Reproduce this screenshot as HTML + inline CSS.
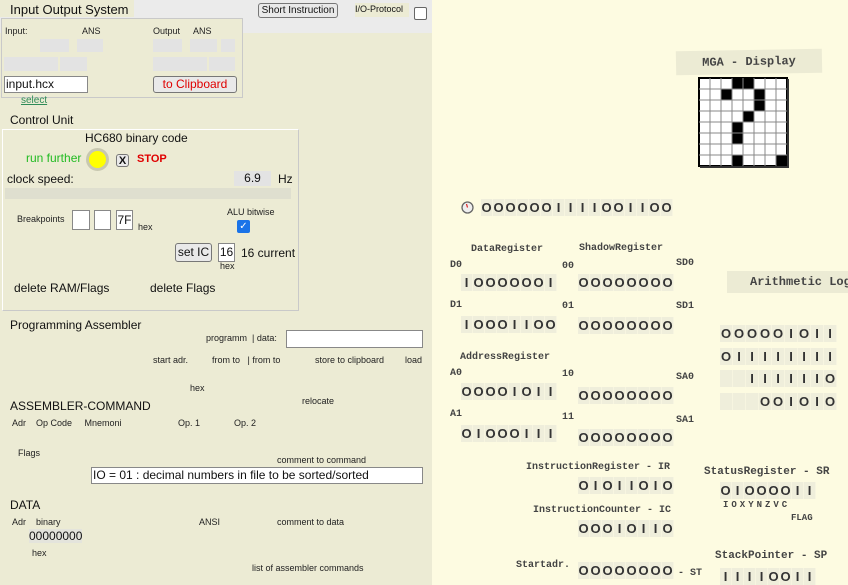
<!DOCTYPE html>
<html><head><meta charset="utf-8"><style>
*{margin:0;padding:0;box-sizing:border-box}
body{width:848px;height:585px;overflow:hidden;position:relative;background:#fdfbe1;font-family:"Liberation Sans",sans-serif;color:#111}
.a{position:absolute;white-space:nowrap}
#left{position:absolute;left:0;top:0;width:432px;height:585px;background:#ecebd4}
.s{font-size:9px;color:#222}
.m{font-family:"Liberation Mono",monospace;font-weight:bold;font-size:10px;color:#444}
.bits{position:absolute;display:flex}
.bits span{display:block;width:12px;height:17px;background:#efeedb;border-right:1px solid #f7f5e0;text-align:center;font:bold 13px/17px "Liberation Sans",sans-serif;color:#333}
.b13 span{width:13px}
.box{position:absolute;border:1px solid #c9c9c9;}
.inp{position:absolute;background:#fff;border:1px solid #888}
.g{position:absolute;background:#e3e3e3}
.btn{position:absolute;border:1px solid #777;border-radius:3px;background:#e9e9e9;font-size:10px;text-align:center}
</style></head><body>
<div id="left">
<div style="position:absolute;left:0;top:0;width:432px;height:33px;background:#ebebeb"></div>
<div class="a" style="left:0;top:0;width:134px;height:17px;background:#ecebd4;font-size:13px;padding-left:10px;line-height:19px">Input Output System</div>
<div class="btn" style="left:258px;top:3px;width:80px;height:15px;line-height:13px">Short Instruction</div>
<div class="a" style="left:355px;top:3px;width:54px;height:14px;background:#ecebd4;font-size:9px;line-height:13px">I/O-Protocol</div>
<div style="position:absolute;left:414px;top:7px;width:13px;height:13px;border:1px solid #666;border-radius:2px;background:#fff"></div>
<div class="box" style="left:1px;top:18px;width:242px;height:80px;background:#ecebd4"></div>
<div class="a s" style="left:5px;top:26px">Input:</div>
<div class="a s" style="left:82px;top:26px">ANS</div>
<div class="a s" style="left:153px;top:26px">Output</div>
<div class="a s" style="left:193px;top:26px">ANS</div>
<div class="g" style="left:40px;top:39px;width:29px;height:13px"></div>
<div class="g" style="left:77px;top:39px;width:26px;height:13px"></div>
<div class="g" style="left:153px;top:39px;width:29px;height:13px"></div>
<div class="g" style="left:190px;top:39px;width:27px;height:13px"></div>
<div class="g" style="left:221px;top:39px;width:14px;height:13px"></div>
<div class="g" style="left:4px;top:57px;width:54px;height:14px"></div>
<div class="g" style="left:60px;top:57px;width:27px;height:14px"></div>
<div class="g" style="left:153px;top:57px;width:54px;height:14px"></div>
<div class="g" style="left:209px;top:57px;width:26px;height:14px"></div>
<div class="inp" style="left:4px;top:76px;width:84px;height:17px;font-size:12px;line-height:15px;padding-left:1px">input.hcx</div>
<div class="btn" style="left:153px;top:76px;width:84px;height:17px;font-size:12px;line-height:15px;color:#e00000">to Clipboard</div>
<div class="a" style="left:21px;top:95px;font-size:10px;color:#2e8b57;text-decoration:underline">select</div>
<div class="a" style="left:10px;top:113px;font-size:12px">Control Unit</div>
<div class="box" style="left:2px;top:129px;width:297px;height:182px;border-color:#fff #c9c9c9 #c9c9c9 #fff"></div>
<div class="a" style="left:85px;top:131px;font-size:12px">HC680 binary code</div>
<div class="a" style="left:26px;top:151px;font-size:12px;color:#22bb22">run further</div>
<div style="position:absolute;left:86px;top:148px;width:23px;height:23px;border-radius:50%;background:#ff0;border:3px solid #c8c8b0"></div>
<div class="btn" style="left:116px;top:154px;width:13px;height:13px;font-size:11px;line-height:12px;font-weight:bold">X</div>
<div class="a" style="left:137px;top:153px;font-size:11px;font-weight:bold;color:#e00000">STOP</div>
<div class="a" style="left:7px;top:172px;font-size:12px">clock speed:</div>
<div class="g" style="left:234px;top:171px;width:37px;height:15px;font-size:12px;text-align:center;line-height:15px">6.9</div>
<div class="a" style="left:278px;top:172px;font-size:12px">Hz</div>
<div class="g" style="left:5px;top:188px;width:286px;height:11px;background:#dfdfcf"></div>
<div class="a s" style="left:17px;top:214px">Breakpoints</div>
<div class="inp" style="left:72px;top:210px;width:18px;height:20px"></div>
<div class="inp" style="left:94px;top:210px;width:17px;height:20px"></div>
<div class="inp" style="left:116px;top:210px;width:17px;height:20px;font-size:12px;line-height:18px;text-align:center">7F</div>
<div class="a s" style="left:138px;top:222px">hex</div>
<div class="a s" style="left:227px;top:207px">ALU bitwise</div>
<div style="position:absolute;left:237px;top:220px;width:13px;height:13px;border-radius:2px;background:#1a73e8;color:#fff;font-size:10px;line-height:13px;text-align:center">✓</div>
<div class="btn" style="left:175px;top:243px;width:37px;height:19px;font-size:12px;line-height:17px">set IC</div>
<div class="inp" style="left:218px;top:243px;width:17px;height:19px;font-size:12px;line-height:17px;text-align:center">16</div>
<div class="a s" style="left:220px;top:261px">hex</div>
<div class="a" style="left:241px;top:246px;font-size:12px">16 current</div>
<div class="a" style="left:14px;top:281px;font-size:12px">delete RAM/Flags</div>
<div class="a" style="left:150px;top:281px;font-size:12px">delete Flags</div>
<div class="a" style="left:10px;top:318px;font-size:12px">Programming Assembler</div>
<div class="a s" style="left:206px;top:333px">programm &nbsp;| data:</div>
<div class="inp" style="left:286px;top:330px;width:137px;height:18px"></div>
<div class="a s" style="left:153px;top:355px">start adr.</div>
<div class="a s" style="left:212px;top:355px">from to &nbsp; | from to</div>
<div class="a s" style="left:315px;top:355px">store to clipboard</div>
<div class="a s" style="left:405px;top:355px">load</div>
<div class="a s" style="left:190px;top:383px">hex</div>
<div class="a s" style="left:302px;top:396px">relocate</div>
<div class="a" style="left:10px;top:399px;font-size:12px">ASSEMBLER-COMMAND</div>
<div class="a s" style="left:12px;top:418px">Adr &nbsp;&nbsp; Op Code &nbsp;&nbsp;&nbsp; Mnemoni</div>
<div class="a s" style="left:178px;top:418px">Op. 1</div>
<div class="a s" style="left:234px;top:418px">Op. 2</div>
<div class="a s" style="left:18px;top:448px">Flags</div>
<div class="a s" style="left:277px;top:455px">comment to command</div>
<div class="inp" style="left:91px;top:467px;width:332px;height:17px;font-size:12px;line-height:15px;padding-left:1px">IO = 01 : decimal numbers in file to be sorted/sorted</div>
<div class="a" style="left:10px;top:498px;font-size:12px">DATA</div>
<div class="a s" style="left:12px;top:517px">Adr &nbsp;&nbsp; binary</div>
<div class="a s" style="left:199px;top:517px">ANSI</div>
<div class="a s" style="left:277px;top:517px">comment to data</div>
<div class="a" style="left:29px;top:529px;font-size:12px;background:#e4e4dc">00000000</div>
<div class="a s" style="left:32px;top:548px">hex</div>
<div class="a s" style="left:252px;top:563px">list of assembler commands</div>
</div>

<div class="a m" style="left:676px;top:50px;width:146px;height:24px;background:#ecebd4;font-size:12px;line-height:24px;text-align:center;transform:rotate(-1deg)">MGA - Display</div>
<svg style="position:absolute;left:698px;top:77px" width="92" height="92">
<rect x="1" y="1" width="88" height="88" fill="#fff" stroke="#000" stroke-width="2"/>
<g fill="#000">
<rect x="34" y="1" width="22" height="11"/>
<rect x="23" y="12" width="11" height="11"/><rect x="56" y="12" width="11" height="22"/>
<rect x="45" y="34" width="11" height="11"/>
<rect x="34" y="45" width="11" height="22"/>
<rect x="34" y="78" width="11" height="11"/><rect x="78" y="78" width="11" height="11"/>
</g>
<g stroke="#888" stroke-width="1">
<path d="M12 1V89M23 1V89M34 1V89M45 1V89M56 1V89M67 1V89M78 1V89M1 12H89M1 23H89M1 34H89M1 45H89M1 56H89M1 67H89M1 78H89"/>
</g>
<path d="M90 2V90H2" stroke="#333" stroke-width="2" fill="none"/>
</svg>

<svg style="position:absolute;left:461px;top:201px" width="13" height="13"><circle cx="6.5" cy="6.5" r="5.5" fill="#eee" stroke="#666" stroke-width="1.3"/><path d="M6.5 6.5L5.5 3" stroke="#d22" stroke-width="1.2"/></svg>
<div class="bits" style="left:481px;top:199px"><span>O</span><span>O</span><span>O</span><span>O</span><span>O</span><span>O</span><span>I</span><span>I</span><span>I</span><span>I</span><span>O</span><span>O</span><span>I</span><span>I</span><span>O</span><span>O</span></div>

<div class="a m" style="left:471px;top:244px">DataRegister</div>
<div class="a m" style="left:579px;top:243px">ShadowRegister</div>
<div class="a m" style="left:450px;top:260px">D0</div><div class="a m" style="left:562px;top:261px">00</div><div class="a m" style="left:676px;top:258px">SD0</div>
<div class="bits" style="left:461px;top:274px"><span>I</span><span>O</span><span>O</span><span>O</span><span>O</span><span>O</span><span>O</span><span>I</span></div>
<div class="bits" style="left:578px;top:274px"><span>O</span><span>O</span><span>O</span><span>O</span><span>O</span><span>O</span><span>O</span><span>O</span></div>
<div class="a m" style="left:450px;top:300px">D1</div><div class="a m" style="left:562px;top:301px">01</div><div class="a m" style="left:676px;top:301px">SD1</div>
<div class="bits" style="left:461px;top:316px"><span>I</span><span>O</span><span>O</span><span>O</span><span>I</span><span>I</span><span>O</span><span>O</span></div>
<div class="bits" style="left:578px;top:317px"><span>O</span><span>O</span><span>O</span><span>O</span><span>O</span><span>O</span><span>O</span><span>O</span></div>
<div class="a m" style="left:460px;top:352px">AddressRegister</div>
<div class="a m" style="left:450px;top:368px">A0</div><div class="a m" style="left:562px;top:369px">10</div><div class="a m" style="left:676px;top:372px">SA0</div>
<div class="bits" style="left:461px;top:383px"><span>O</span><span>O</span><span>O</span><span>O</span><span>I</span><span>O</span><span>I</span><span>I</span></div>
<div class="bits" style="left:578px;top:387px"><span>O</span><span>O</span><span>O</span><span>O</span><span>O</span><span>O</span><span>O</span><span>O</span></div>
<div class="a m" style="left:450px;top:409px">A1</div><div class="a m" style="left:562px;top:412px">11</div><div class="a m" style="left:676px;top:415px">SA1</div>
<div class="bits" style="left:461px;top:425px"><span>O</span><span>I</span><span>O</span><span>O</span><span>O</span><span>I</span><span>I</span><span>I</span></div>
<div class="bits" style="left:578px;top:429px"><span>O</span><span>O</span><span>O</span><span>O</span><span>O</span><span>O</span><span>O</span><span>O</span></div>
<div class="a m" style="left:526px;top:462px">InstructionRegister - IR</div>
<div class="bits" style="left:578px;top:477px"><span>O</span><span>I</span><span>O</span><span>I</span><span>I</span><span>O</span><span>I</span><span>O</span></div>
<div class="a m" style="left:533px;top:505px">InstructionCounter - IC</div>
<div class="bits" style="left:578px;top:520px"><span>O</span><span>O</span><span>O</span><span>I</span><span>O</span><span>I</span><span>I</span><span>O</span></div>
<div class="a m" style="left:516px;top:560px">Startadr.</div>
<div class="bits" style="left:578px;top:562px"><span>O</span><span>O</span><span>O</span><span>O</span><span>O</span><span>O</span><span>O</span><span>O</span></div>
<div class="a m" style="left:678px;top:568px">- ST</div>

<div class="a m" style="left:727px;top:271px;width:130px;height:22px;background:#ecebd4;font-size:12px;line-height:22px;padding-left:23px">Arithmetic Logic</div>
<div class="bits b13" style="left:720px;top:325px"><span>O</span><span>O</span><span>O</span><span>O</span><span>O</span><span>I</span><span>O</span><span>I</span><span>I</span></div>
<div class="bits b13" style="left:720px;top:348px"><span>O</span><span>I</span><span>I</span><span>I</span><span>I</span><span>I</span><span>I</span><span>I</span><span>I</span></div>
<div class="bits b13" style="left:720px;top:370px"><span></span><span></span><span>I</span><span>I</span><span>I</span><span>I</span><span>I</span><span>I</span><span>O</span></div>
<div class="bits b13" style="left:720px;top:393px"><span></span><span></span><span></span><span>O</span><span>O</span><span>I</span><span>O</span><span>I</span><span>O</span></div>
<div class="a m" style="left:704px;top:466px;font-size:11px">StatusRegister - SR</div>
<div class="bits" style="left:720px;top:482px"><span>O</span><span>I</span><span>O</span><span>O</span><span>O</span><span>O</span><span>I</span><span>I</span></div>
<div class="a m" style="left:723px;top:500px;font-size:9px;letter-spacing:3px">IOXYNZVC</div>
<div class="a m" style="left:791px;top:513px;font-size:9px">FLAG</div>
<div class="a m" style="left:715px;top:550px;font-size:11px">StackPointer - SP</div>
<div class="bits" style="left:720px;top:568px"><span>I</span><span>I</span><span>I</span><span>I</span><span>O</span><span>O</span><span>I</span><span>I</span></div>
</body></html>
